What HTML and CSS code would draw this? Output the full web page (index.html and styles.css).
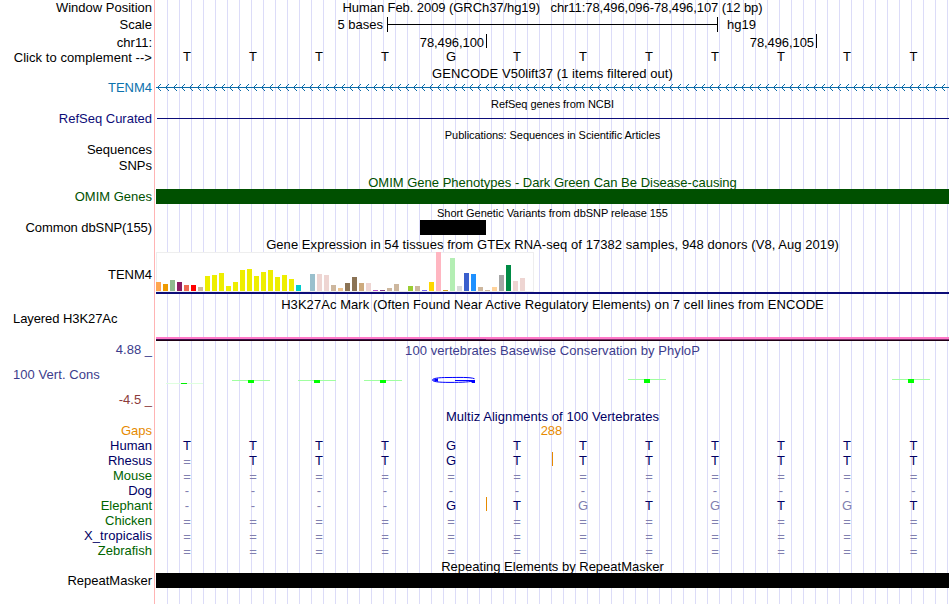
FILE: index.html
```html
<!DOCTYPE html>
<html lang="en">
<head>
    <meta charset="UTF-8">
    <title>Human chr11:78,496,096-78,496,107</title>
    <link rel="stylesheet" href="styles.css">
</head>
<body>
    <div class="browser">
        <div class="row h16">
            <div class="label">Window Position</div>
            <div class="title position">Human Feb. 2009 (GRCh37/hg19) &nbsp; chr11:78,496,096-78,496,107 (12 bp)</div>
        </div>
        <div class="row scale">
            <div class="label">Scale</div>
            <div class="track">
                <span class="scale-text">5 bases</span>
                <span class="ruler"></span>
                <span class="assembly">hg19</span>
            </div>
        </div>
        <div class="row chrom">
            <div class="label">chr11:</div>
            <div class="track">
                <span class="tick tick-first">78,496,100</span>
                <span class="tick">78,496,105</span>
            </div>
        </div>
        <div class="row h15">
            <div class="label wide">Click to complement --&gt;</div>
            <div class="bases ruler-bases" data-bases="TTTTGTTTTTTT"></div>
        </div>

        <div class="row h15">
            <div class="label"></div>
            <div class="title wide">GENCODE V50lift37 (1 items filtered out)</div>
        </div>
        <div class="row h15">
            <div class="label gene">TENM4</div>
            <svg class="intron" width="793" height="15">
                <defs>
                    <pattern id="arrows" x="1" y="0" width="8" height="15" patternUnits="userSpaceOnUse">
                        <path d="M0 7h1v1h-1z M1 6h1v1h-1z M1 8h1v1h-1z M2 5h1v1h-1z M2 9h1v1h-1z M3 4h1v1h-1z M3 10h1v1h-1z" fill="#0c6ca8"/>
                    </pattern>
                </defs>
                <rect y="7" width="793" height="1" fill="#0c6ca8"/>
                <rect x="1" width="791" height="15" fill="url(#arrows)"/>
            </svg>
        </div>

        <div class="row h16">
            <div class="label"></div>
            <div class="title small">RefSeq genes from NCBI</div>
        </div>
        <div class="row h15">
            <div class="label navy">RefSeq Curated</div>
            <div class="track"><div class="refseq"></div></div>
        </div>

        <div class="row h16">
            <div class="label"></div>
            <div class="title small">Publications: Sequences in Scientific Articles</div>
        </div>
        <div class="row h16">
            <div class="label">Sequences</div>
        </div>
        <div class="row h15">
            <div class="label">SNPs</div>
        </div>

        <div class="row h16">
            <div class="label"></div>
            <div class="title omim low">OMIM Gene Phenotypes - Dark Green Can Be Disease-causing</div>
        </div>
        <div class="row h15">
            <div class="label omim">OMIM Genes</div>
            <div class="bar bar-omim"></div>
        </div>

        <div class="row h16">
            <div class="label"></div>
            <div class="title small">Short Genetic Variants from dbSNP release 155</div>
        </div>
        <div class="row h15">
            <div class="label narrow">Common dbSNP(155)</div>
            <div class="bar bar-snp"></div>
        </div>

        <div class="row h16">
            <div class="label"></div>
            <div class="title low wide">Gene Expression in 54 tissues from GTEx RNA-seq of 17382 samples, 948 donors (V8, Aug 2019)</div>
        </div>
        <div class="row gtex">
            <div class="label">TENM4</div>
            <div class="track">
                <div class="tissues" id="tissues"></div>
            </div>
        </div>

        <div class="row h16">
            <div class="label"></div>
            <div class="title low wide">H3K27Ac Mark (Often Found Near Active Regulatory Elements) on 7 cell lines from ENCODE</div>
        </div>
        <div class="row h3k">
            <div class="label left narrow">Layered H3K27Ac</div>
            <div class="track"><div class="marks"></div></div>
        </div>

        <div class="row h16">
            <div class="label cons">4.88 _</div>
            <div class="title cons phylop-title wide">100 vertebrates Basewise Conservation by PhyloP</div>
        </div>
        <div class="row phylop">
            <div class="label-stack">
                <div class="label left cons wide">100 Vert. Cons</div>
                <div class="label cons-min">-4.5 _</div>
            </div>
            <svg width="793" height="50">
                <rect x="10" y="25" width="37" height="1" fill="#dfffdf"/>
                <rect x="25" y="25" width="6" height="1" fill="#00f000"/>
                <g id="low-t">
                    <rect x="76" y="22" width="38" height="1" fill="#a0ffa0"/>
                    <rect x="92" y="22" width="6" height="3" fill="#00ff00"/>
                </g>
                <use href="#low-t" x="66"/>
                <use href="#low-t" x="132"/>
                <path d="M318.5 20.7 C314 19 303 19.5 292 19.5 C282 19.5 276.5 20.4 276.5 22 C276.5 23.6 282 24.4 294 24.4 C306 24.4 315 24 318.5 22.5 M299 22.5 H319" fill="none" stroke="#0000ff" stroke-width="1"/>
                <path d="M276 22 L282 20.3 V23.7 Z M314 22 H319 V25 H316 Z" fill="#0000ff"/>
                <g id="high-t">
                    <rect x="472" y="21" width="38" height="1" fill="#a0ffa0"/>
                    <rect x="488" y="21" width="6" height="4" fill="#00ff00"/>
                </g>
                <use href="#high-t" x="264"/>
            </svg>
        </div>

        <div class="row h16">
            <div class="label"></div>
            <div class="title maf wide">Multiz Alignments of 100 Vertebrates</div>
        </div>
        <div class="row species">
            <div class="label gap">Gaps</div>
            <div class="title gap gap-size">288</div>
        </div>
        <div class="row species">
            <div class="label maf">Human</div>
            <div class="bases maf" data-bases="TTTTGTTTTTTT"></div>
        </div>
        <div class="row species">
            <div class="label maf">Rhesus</div>
            <div class="bases maf" data-bases="=TTTGTTTTTTT" data-insert="6"></div>
        </div>
        <div class="row species">
            <div class="label green">Mouse</div>
            <div class="bases maf" data-bases="============"></div>
        </div>
        <div class="row species">
            <div class="label maf">Dog</div>
            <div class="bases maf" data-bases="------------"></div>
        </div>
        <div class="row species">
            <div class="label green">Elephant</div>
            <div class="bases maf" data-bases="----GTgTgTgT" data-insert="5"></div>
        </div>
        <div class="row species">
            <div class="label green">Chicken</div>
            <div class="bases maf" data-bases="============"></div>
        </div>
        <div class="row species">
            <div class="label maf wide">X_tropicalis</div>
            <div class="bases maf" data-bases="============"></div>
        </div>
        <div class="row species">
            <div class="label green">Zebrafish</div>
            <div class="bases maf" data-bases="============"></div>
        </div>

        <div class="row h14">
            <div class="label"></div>
            <div class="title repeats">Repeating Elements by RepeatMasker</div>
        </div>
        <div class="row h15">
            <div class="label">RepeatMasker</div>
            <div class="bar"></div>
        </div>
    </div>

    <script>
        // one [color, height] pair per GTEx tissue
        const tissues = [
            ["#ffa54f", 9], ["#ee9a00", 7], ["#8fbc8f", 11], ["#8b1c62", 9], ["#ee6a50", 6], ["#ff0000", 6],
            ["#cdb79e", 4], ["#eeee00", 15], ["#eeee00", 16], ["#eeee00", 18], ["#eeee00", 5], ["#eeee00", 9],
            ["#eeee00", 21], ["#eeee00", 22], ["#eeee00", 15], ["#eeee00", 19], ["#eeee00", 21], ["#eeee00", 14],
            ["#eeee00", 16], ["#eeee00", 12], ["#00cdcd", 6], ["#ee82ee", 0], ["#9ac0cd", 17], ["#eed5d2", 17],
            ["#eed5d2", 16], ["#cdb79e", 6], ["#eec591", 3], ["#8b7355", 8], ["#8b7355", 14], ["#cdaa7d", 8],
            ["#eed5d2", 8], ["#b452cd", 1], ["#7a378b", 1], ["#cdb79e", 3], ["#cdb79e", 7], ["#cdb79e", 0],
            ["#9acd32", 5], ["#cdb79e", 5], ["#7a67ee", 1], ["#ffd700", 9], ["#ffb6c1", 39], ["#cd9b1d", 1],
            ["#b4eeb4", 33], ["#d9d9d9", 5], ["#3a5fcd", 18], ["#1e90ff", 17], ["#cdb79e", 4], ["#cdb79e", 1],
            ["#ffd39b", 4], ["#a6a6a6", 16], ["#008b45", 26], ["#eed5d2", 10], ["#eed5d2", 13], ["#ff00ff", 0]
        ];

        const chart = document.getElementById("tissues");
        for (const [color, height] of tissues) {
            const bar = document.createElement("div");
            bar.className = "tissue";
            bar.style.height = height + "px";
            bar.style.backgroundColor = color;
            chart.appendChild(bar);
        }

        // lower case marks a base that differs from human
        document.querySelectorAll(".bases").forEach(row => {
            [...row.dataset.bases].forEach((base, i) => {
                const cell = document.createElement("span");
                cell.className = "base";
                cell.textContent = base.toUpperCase();
                if (/[=g-]/.test(base)) cell.classList.add("faint");
                if (base === "=") cell.classList.add("double");
                if (Number(row.dataset.insert) === i + 1) cell.classList.add("insert");
                row.appendChild(cell);
            });
        });
    </script>
</body>
</html>
```
FILE: styles.css
```css
body {
    margin: 0;
    background-color: white;
    font-family: "Liberation Sans", Arial, sans-serif;
    font-size: 13px;
    color: #000;
}

/* guide lines every 12px, red line between labels and tracks */
.browser {
    width: 950px;
    height: 604px;
    overflow: hidden;
    background-image:
        linear-gradient(#ffb4b4, #ffb4b4),
        repeating-linear-gradient(to right, transparent 0, transparent 11px, #dcdcf8 11px, #dcdcf8 12px);
    background-position: 154px 0, 156px 0;
    background-size: 1px 100%, 793px 100%;
    background-repeat: no-repeat;
}

.row {
    display: grid;
    grid-template-columns: 156px 793px;
    line-height: 16px;
    white-space: nowrap;
}

.h14 { height: 14px; }
.h15 { height: 15px; line-height: 15px; }
.h16 { height: 16px; }
.species { height: 15px; line-height: 13px; }

.label {
    text-align: right;
    padding-right: 4px;
}

.left {
    text-align: left;
    padding-left: 13px;
}

.title {
    text-align: center;
    line-height: 17px;
}

.low {
    line-height: 19px;
}

.small {
    font-size: 11px;
    line-height: 19px;
    letter-spacing: -0.05px;
}

.wide {
    letter-spacing: 0.06px;
}

.narrow {
    letter-spacing: -0.08px;
}

.position {
    line-height: 15px;
    letter-spacing: -0.07px;
}

.gene { color: #0c72ad; }
.navy { color: #0c0c78; }
.omim { color: #005000; }
.cons { color: #3c3c8c; }
.cons-min { color: #8c3c3c; }
.gap { color: #e68a00; }
.maf { color: #000064; }
.green { color: #006400; }

.gap-size {
    line-height: 13px;
    padding-right: 2px;
}

.scale {
    height: 18px;
    line-height: 18px;
}

.scale .track {
    display: flex;
}

.scale-text {
    width: 227px;
    text-align: right;
    line-height: 17px;
}

.ruler {
    width: 329px;
    height: 15px;
    margin: 1px 9px 0 4px;
    border-left: 1px solid #000;
    border-right: 1px solid #000;
    background: linear-gradient(#000, #000) 0 7px / 100% 1px no-repeat;
}

.assembly {
    line-height: 17px;
}

.chrom {
    height: 16px;
    line-height: 17px;
}

.chrom .track {
    display: flex;
}

.tick {
    box-sizing: border-box;
    width: 330px;
    height: 14px;
    padding-right: 2px;
    border-right: 1px solid #000;
    text-align: right;
    letter-spacing: -0.08px;
}

.tick-first {
    width: 331px;
}

.bases {
    display: grid;
    grid-template-columns: repeat(11, 66px) 67px;
}

.base {
    position: relative;
    padding-right: 4px;
    text-align: center;
}

.ruler-bases .base {
    line-height: 13px;
}

.faint {
    color: #8080b0;
}

.bases .double {
    line-height: 16px;
}

.insert::after {
    content: "";
    position: absolute;
    right: -1px;
    top: -2px;
    width: 1px;
    height: 14px;
    background-color: #e68a00;
}

.refseq {
    height: 1px;
    margin: 7px 0 0 1px;
    background-color: #0c0c78;
}

.bar {
    background-color: #000;
}

.bar-omim {
    background-color: #005000;
}

.bar-snp {
    width: 66px;
    margin-left: 264px;
}

.gtex {
    height: 44px;
}

.gtex .label {
    line-height: 47px;
}

.gtex .track {
    height: 41px;
    border-bottom: 2px solid #0c0c78;
}

.tissues {
    box-sizing: border-box;
    display: flex;
    align-items: flex-end;
    gap: 2px;
    width: 378px;
    height: 40px;
    margin-top: 1px;
    background-color: white;
    box-shadow: inset 0 0 0 1px #eee;
    padding-bottom: 1px;
}

.tissue {
    width: 5px;
}

.h3k {
    height: 31px;
}

.marks {
    height: 4px;
    margin-top: 26px;
    background:
        linear-gradient(#ff78c8, #ff78c8) 0 0 / 100% 2px no-repeat,
        linear-gradient(to right, #40144c 330px, #80306a 330px) 0 2px / 100% 1px no-repeat,
        #1e0014;
}

.phylop-title {
    line-height: 18px;
}

.phylop {
    height: 50px;
}

.label-stack {
    display: flex;
    flex-direction: column;
    gap: 9px;
    padding-top: 9px;
}

.repeats {
    line-height: 15px;
}
```
